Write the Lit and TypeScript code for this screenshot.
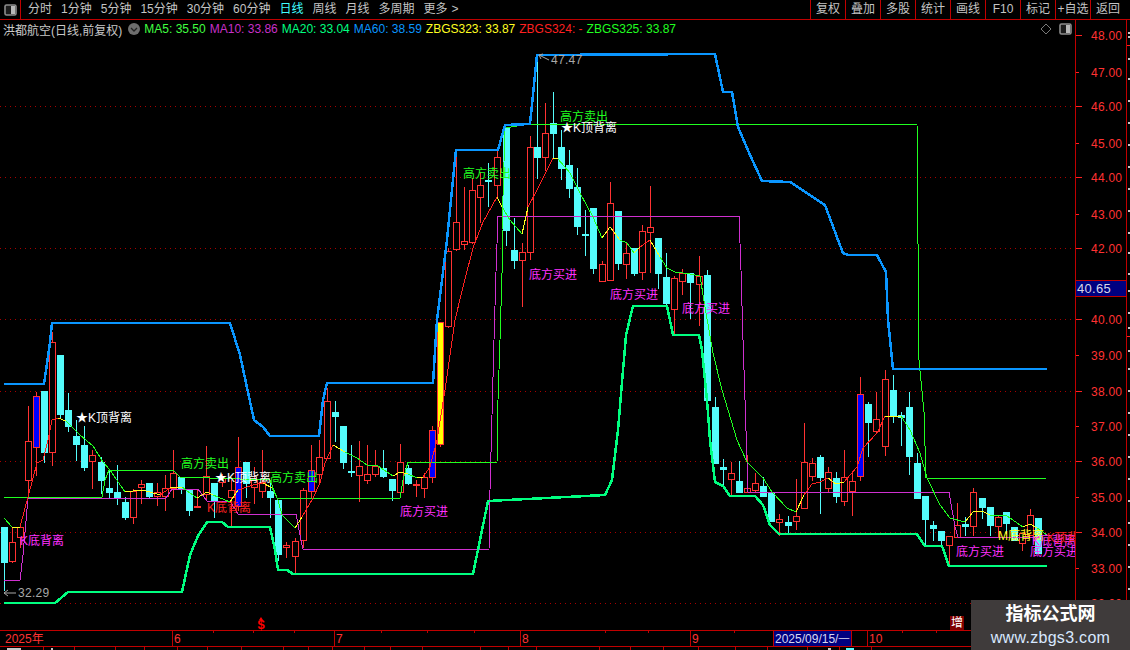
import { LitElement, html, css, svg } from "lit";
import { customElement } from "lit/decorators.js";

type Kind = "c" | "r" | "b" | "y";
type Candle = [number, Kind, number, number, number, number];

const RED = "#ff3232";
const CYAN = "#54fcfc";

const CANDLES: Candle[] = [
  [4,"c",527,562,527,590],[12,"r",542,561,527,562],[20,"r",527,537,527,547],[28,"r",441,480,406,493],
  [36,"b",396,447,392,475],[44,"c",391,452,391,462],[52,"r",342,452,332,465],[60,"c",355,414,355,418],
  [68,"c",410,426,393,431],[76,"c",436,444,420,460],[84,"c",445,467,426,470],[92,"r",455,461,450,488],
  [101,"c",462,480,457,493],[109,"c",488,492,470,497],[117,"c",492,497,465,504],[125,"c",502,517,497,519],
  [133,"r",491,517,489,523],[141,"r",484,487,480,503],[149,"c",483,496,483,498],[157,"r",492,496,483,505],
  [165,"r",488,496,475,510],[173,"r",473,488,450,497],[181,"c",477,489,477,493],[189,"c",490,510,490,515],
  [197,"r",506,507,490,507],[206,"r",476,494,446,500],[214,"c",483,501,483,517],[222,"r",478,482,474,486],
  [231,"r",490,497,480,527],[238,"b",467,506,437,510],[246,"c",462,483,462,497],[254,"r",480,487,467,503],
  [262,"r",482,491,450,497],[270,"c",491,497,480,517],[278,"c",500,554,500,560],[286,"r",545,547,542,557],
  [295,"r",541,556,538,573],[303,"r",490,540,488,547],[311,"b",470,491,445,498],[319,"r",457,474,440,483],
  [327,"r",401,458,388,458],[335,"c",412,416,401,441],[343,"c",426,462,426,468],[351,"c",471,472,445,476],
  [359,"r",466,475,441,501],[367,"r",474,480,445,483],[375,"r",466,474,450,476],[383,"c",468,476,450,477],
  [392,"c",479,490,479,500],[400,"r",462,492,444,496],[408,"c",468,483,465,484],[416,"r",484,485,480,496],
  [424,"r",477,488,473,497],[432,"b",430,477,426,482],[440,"y",322,444,322,446],[448,"r",251,326,248,327],
  [456,"r",222,249,150,250],[464,"r",241,244,187,249],[472,"r",190,242,178,243],[480,"r",185,197,172,222],
  [488,"c",180,181,163,206],[497,"r",157,185,148,198],[506,"c",128,230,128,245],[514,"c",250,260,218,268],
  [522,"r",252,260,243,306],[530,"r",147,252,136,259],[537,"c",147,157,55,178],[545,"r",133,157,103,170],
  [553,"c",123,133,92,158],[561,"c",147,168,130,179],[569,"c",165,188,150,197],[577,"c",187,226,168,234],
  [585,"c",234,235,210,255],[593,"c",208,268,208,273],[602,"r",264,281,261,281],[610,"r",203,280,182,280],
  [618,"c",211,263,211,269],[626,"r",253,264,242,278],[634,"c",248,273,248,275],[642,"r",231,272,225,279],
  [650,"r",227,232,186,272],[658,"c",238,273,238,288],[666,"c",277,303,253,305],[674,"r",278,309,276,333],
  [682,"r",273,281,269,294],[690,"c",273,282,273,318],[699,"r",276,284,256,325],[707,"c",275,400,270,400],
  [715,"c",407,463,397,463],[723,"c",467,469,459,487],[731,"r",473,479,462,495],[739,"c",481,492,461,492],
  [747,"r",488,492,455,492],[755,"r",483,490,473,492],[763,"c",486,496,477,496],[771,"c",493,521,493,521],
  [779,"r",519,522,514,535],[788,"c",522,525,516,532],[796,"r",516,521,479,529],[804,"r",462,508,423,508],
  [812,"r",463,476,458,480],[820,"c",457,477,455,513],[828,"r",472,488,467,491],[836,"c",478,496,472,502],
  [844,"r",477,501,450,505],[852,"r",481,491,473,515],[860,"b",394,476,377,480],[868,"c",404,422,402,456],
  [876,"r",419,431,392,432],[885,"r",379,446,370,455],[893,"c",390,415,375,422],[901,"c",415,417,412,445],
  [909,"c",407,456,392,474],[917,"c",463,498,453,498],[925,"c",496,519,496,545],[933,"c",525,528,521,540],
  [941,"c",531,540,531,545],[949,"r",536,545,536,566],[957,"r",525,537,503,537],[965,"c",524,526,517,535],
  [973,"r",492,526,488,535],[982,"c",498,507,498,518],[990,"c",507,525,507,535],[998,"r",517,526,515,537],
  [1006,"c",512,523,512,533],[1014,"c",527,540,527,540],[1022,"r",533,543,533,550],[1030,"r",515,535,509,535],
  [1038,"c",518,553,518,553],
];

const BLUE: number[][] = [[4,384],[44,384],[50,343],[52,323],[230,323],[240,355],[254,420],[263,427],[270,436],[319,436],[323,400],[327,383],[433,383],[437,320],[447,240],[456,150],[498,150],[505,125],[530,124],[537,55],[715,54],[723,92],[732,92],[738,127],[750,155],[762,181],[790,182],[825,205],[838,240],[843,253],[848,255],[877,255],[886,272],[888,320],[893,369],[1047,369]];
const SPRING: number[][] = [[4,603],[55,603],[68,592],[182,592],[190,555],[198,536],[207,522],[222,522],[228,527],[270,527],[275,550],[278,570],[287,570],[293,574],[473,574],[480,540],[488,501],[605,495],[612,480],[618,430],[626,335],[633,306],[667,306],[673,335],[699,335],[702,350],[707,400],[710,440],[715,482],[723,486],[730,496],[755,496],[763,505],[770,525],[779,534],[917,534],[925,546],[942,546],[949,566],[1047,566]];
const GREEN: number[][] = [[4,497],[102,497],[105,480],[109,470],[173,470],[180,477],[270,480],[277,498],[400,498],[403,480],[408,462],[497,462],[498,400],[500,340],[502,273],[502,230],[505,128],[530,124],[917,124],[919,360],[924,412],[926,478],[1046,479]];
const MAGENTA: number[][] = [[4,580],[20,580],[23,555],[28,498],[166,498],[172,489],[198,489],[207,501],[230,501],[238,514],[296,514],[301,540],[303,549],[489,549],[490,490],[494,340],[496,272],[498,216],[739,216],[741,270],[743,340],[745,400],[748,492],[949,492],[955,527],[958,537],[1040,537]];

const MA_RAW = "4,518,g 12,527,g 20,527,y 28,497,r 37,463,r 43,460,r 48,440,r 52,420,r 58,418,r 66,421,y 80,435,g 93,446,g 103,462,g 110,470,g 125,492,g 133,491,y 142,490,y 150,492,y 160,495,y 170,488,r 182,487,y 190,493,g 197,498,g 207,492,y 213,495,y 230,502,g 238,490,y 253,485,r 263,483,r 272,488,y 278,500,g 282,515,g 295,528,g 302,517,y 313,498,r 320,483,r 325,463,r 333,445,r 345,452,y 357,458,g 367,465,g 378,466,g 393,476,g 400,472,y 408,474,y 417,478,g 423,477,y 430,467,r 437,440,r 445,390,r 455,320,r 463,287,r 473,248,r 483,222,r 497,197,r 502,207,y 510,220,g 522,234,g 528,207,y 537,190,r 553,158,r 558,159,y 570,173,g 580,193,g 593,217,g 602,238,g 610,227,y 620,240,y 627,243,g 634,253,g 640,247,y 650,240,r 660,257,y 667,268,g 675,272,g 690,274,g 700,276,g 705,307,g 713,353,g 722,390,g 737,440,g 747,462,g 763,478,g 772,492,g 787,508,g 796,512,g 804,495,y 812,484,r 820,482,r 828,478,r 836,484,y 844,482,y 857,467,r 863,448,r 877,433,r 885,416,r 901,416,y 910,430,g 920,453,g 927,478,g 940,505,g 950,518,g 965,522,g 973,512,y 982,511,y 990,515,y 1007,516,g 1023,527,g 1030,524,y 1037,528,y 1047,535,g";
const MA = MA_RAW.split(" ").map((s) => s.split(","));
const MA_COL: Record<string, string> = { g: "#20ff20", y: "#ffff20", r: "#ff2020" };

const HI = "高方卖出";
const LO = "底方买进";
const LABELS: [number, number, string, string][] = [
  [76, 417, "★K顶背离", "#ffffff"],
  [20, 540, "K底背离", "#ff30ff"],
  [181, 463, HI, "#20ff20"],
  [215, 477, "★K顶背离", "#ffffff"],
  [270, 477, HI, "#20ff20"],
  [207, 507, "K底背离", "#ff2020"],
  [400, 511, LO, "#ff30ff"],
  [463, 173, HI, "#20ff20"],
  [560, 116, HI, "#20ff20"],
  [561, 127, "★K顶背离", "#ffffff"],
  [529, 274, LO, "#ff30ff"],
  [610, 294, LO, "#ff30ff"],
  [682, 308, LO, "#ff30ff"],
  [956, 551, LO, "#ff30ff"],
  [1030, 551, LO, "#ff30ff"],
  [998, 535, "M底背离", "#ffff20"],
  [1032, 540, "K底背离", "#ff30ff"],
  [1047, 537, "K顶背离", "#ff2020"],
];

const GRID = [106, 177, 248, 319, 391, 461, 532, 603];
const TOOLS = ["分时", "1分钟", "5分钟", "15分钟", "30分钟", "60分钟", "日线", "周线", "月线", "多周期", "更多"];
const ACTIONS = ["复权", "叠加", "多股", "统计", "画线", "F10", "标记", "+自选", "返回"];
const LEGEND: [string, string][] = [
  ["MA5: 35.50", "#40ff40"],
  ["MA10: 33.86", "#c830c8"],
  ["MA20: 33.04", "#00ff80"],
  ["MA60: 38.59", "#0a96ff"],
  ["ZBGS323: 33.87", "#ffff20"],
  ["ZBGS324: -", "#ff2020"],
  ["ZBGS325: 33.87", "#20ff20"],
];
const PRICES = [48, 47, 46, 45, 44, 43, 42, 40, 39, 38, 37, 36, 35, 34, 33, 32];
const PRICE_Y: Record<number, number> = { 48: 35, 47: 72, 46: 106, 45: 143, 44: 177, 43: 214, 42: 248, 40: 319, 39: 355, 38: 391, 37: 426, 36: 461, 35: 497, 34: 532, 33: 568, 32: 603 };
const EDGE_TICKS = [32, 36, 58, 78, 100, 122, 144, 166, 188, 210, 232, 252, 273, 290, 312, 327, 350, 368, 390, 412, 434, 456, 478, 500, 522, 544, 566, 588];
const EDGE_RED = [45, 336];
const T_TOP = [213, 253, 294, 381, 427, 474, 605, 648, 734, 902, 936];
const T_DIV = [172, 334, 520, 690, 867];
const T_LOW = [43, 74, 115, 144, 177, 207, 241, 283, 308, 332, 364, 390, 422, 480, 508, 536, 599, 630, 663, 698, 735, 767, 807, 839, 871];

const pts = (a: number[][]) => a.map((p) => p.join(",")).join(" ");

const chevronIcon = html`<svg class="dot" viewBox="0 0 12 12" width="12" height="12">
  <circle cx="6" cy="6" r="6" fill="#6e6e6e"></circle>
  <path d="M3 5 L6 8 L9 5" fill="none" stroke="#222" stroke-width="1.3"></path>
</svg>`;

const layoutIcon = (cls: string) => html`<svg class=${cls} viewBox="0 0 13 12" width="13" height="12">
  <rect x="1" y="1" width="11" height="10" rx="1.5" fill="#1c1c1c" stroke="#8c8c8c" stroke-width="1.6"></rect>
  <rect x="7" y="2" width="4" height="8" fill="#b8b8b8"></rect>
</svg>`;

const diamondIcon = html`<svg viewBox="0 0 12 12" width="12" height="12">
  <path d="M6 1 L11 6 L6 11 L1 6 Z" fill="none" stroke="#7a7a7a"></path>
</svg>`;

function candle(c: Candle) {
  const [x, k, top, bot, hi, lo] = c;
  const up = k === "r" || k === "b" || k === "y";
  const wick = up ? RED : CYAN;
  const line = svg`<rect x=${x} y=${hi} width="1" height=${lo - hi + 1} fill=${wick}></rect>`;
  if (k === "c") {
    return svg`${line}<rect x=${x - 3} y=${top} width="7" height=${bot - top + 1} fill=${CYAN}></rect>`;
  }
  const fill = k === "b" ? "#0000ff" : k === "y" ? "#ffff00" : "#000000";
  return svg`${line}<rect x=${x - 2.5} y=${top + 0.5} width="6" height=${Math.max(bot - top, 1)} fill=${fill} stroke=${RED}></rect>`;
}

@customElement("price-plot")
class PricePlot extends LitElement {
  static styles = css`
    :host { display: block; width: 1075px; height: 610px; }
    svg { display: block; }
    .line { fill: none; shape-rendering: crispEdges; }
    .grid { stroke: #a80000; stroke-width: 1; stroke-dasharray: 1 4; shape-rendering: crispEdges; }
    .mark { font: 12px "Liberation Sans", "Noto Sans CJK SC", sans-serif; }
    .note { font: 12px "Liberation Sans", sans-serif; fill: #a8a8a8; letter-spacing: 0.3px; }
    .arrow { stroke: #a8a8a8; fill: none; }
    .candles { shape-rendering: crispEdges; }
  `;
  render() {
    return html`<svg viewBox="0 20 1075 610" width="1075" height="610">
      ${GRID.map((y) => svg`<line class="grid" x1="0" x2="1075" y1=${y + 0.5} y2=${y + 0.5}></line>`)}
      <g class="candles">${CANDLES.map(candle)}</g>
      <polyline class="line" points=${pts(MAGENTA)} stroke="#d030d0" stroke-width="1"></polyline>
      <polyline class="line" points=${pts(GREEN)} stroke="#20ff20" stroke-width="1"></polyline>
      <polyline class="line" points=${pts(BLUE)} stroke="#0a96ff" stroke-width="2.5"></polyline>
      <polyline class="line" points=${pts(SPRING)} stroke="#00ff80" stroke-width="2.5"></polyline>
      ${MA.slice(1).map((p, i) => svg`<line class="line" x1=${MA[i][0]} y1=${MA[i][1]} x2=${p[0]} y2=${p[1]} stroke=${MA_COL[p[2]]} stroke-width="1"></line>`)}
      ${LABELS.map(([x, y, t, c]) => svg`<text class="mark" x=${x} y=${y + 5} fill=${c}>${t}</text>`)}
      <path class="arrow" d="M539 55 L549 60 M539 55 L543 54 M539 55 L541 59"></path>
      <text class="note" x="551" y="64">47.47</text>
      <path class="arrow" d="M4 593 H16 M4 593 L8 590 M4 593 L8 596"></path>
      <text class="note" x="18" y="597">32.29</text>
    </svg>`;
  }
}

@customElement("price-axis")
class PriceAxis extends LitElement {
  static styles = css`
    :host { display: block; width: 55px; height: 610px; }
    svg { display: block; shape-rendering: crispEdges; }
    .num { font: 12px "Liberation Sans", sans-serif; fill: #ff3232; letter-spacing: 0.25px; }
    .cur { font: 13px "Liberation Sans", sans-serif; fill: #d8d8e8; letter-spacing: 0.3px; }
  `;
  render() {
    return html`<svg viewBox="1075 20 55 610" width="55" height="610">
      <rect x="1075" y="20" width="1" height="610" fill="#c00000"></rect>
      <rect x="1126" y="20" width="1" height="610" fill="#c00000"></rect>
      ${PRICES.map((p) => {
        const y = PRICE_Y[p];
        const w = p % 2 === 0 ? 6 : 3;
        return svg`<rect x="1076" y=${y} width=${w} height="1" fill="#ff2020"></rect>
          <text class="num" x="1091" y=${y + 5}>${p.toFixed(2)}</text>`;
      })}
      <rect x="1075.5" y="280.5" width="51" height="16" fill="#000080" stroke="#c00000"></rect>
      <text class="cur" x="1077" y="293">40.65</text>
      ${EDGE_TICKS.map((y) => svg`<rect x="1128" y=${y} width="2" height="2" fill="#c8c8c8"></rect>`)}
      ${EDGE_RED.map((y) => svg`<rect x="1127" y=${y} width="3" height="1" fill="#ff2020"></rect>`)}
    </svg>`;
  }
}

@customElement("time-axis")
class TimeAxis extends LitElement {
  static styles = css`
    :host { display: block; width: 1130px; height: 20px; }
    svg { display: block; shape-rendering: crispEdges; }
    .t { font: 12px "Liberation Sans", "Noto Sans CJK SC", sans-serif; fill: #ff3232; }
    .date { font: 12px "Liberation Sans", sans-serif; fill: #d8d8f0; }
  `;
  render() {
    return html`<svg viewBox="0 630 1130 20" width="1130" height="20">
      <rect x="0" y="630" width="1130" height="1" fill="#c00000"></rect>
      <rect x="0" y="646" width="1130" height="1" fill="#c00000"></rect>
      ${T_TOP.map((x) => svg`<rect x=${x} y="631" width="1" height="2" fill="#c00000"></rect>`)}
      ${T_DIV.map((x) => svg`<rect x=${x} y="631" width="1" height="15" fill="#c00000"></rect>`)}
      ${T_LOW.map((x) => svg`<rect x=${x} y="647" width="1" height="3" fill="#c00000"></rect>`)}
      <rect x="7" y="648" width="14" height="2" fill="#c8c8c8"></rect>
      <rect x="51" y="648" width="2" height="2" fill="#c8c8c8"></rect>
      <rect x="828" y="648" width="3" height="2" fill="#c8c8c8"></rect>
      <rect x="846" y="648" width="8" height="2" fill="#54fcfc"></rect>
      <text class="t" x="5" y="643">2025年</text>
      <text class="t" x="174" y="643">6</text>
      <text class="t" x="336" y="643">7</text>
      <text class="t" x="522" y="643">8</text>
      <text class="t" x="692" y="643">9</text>
      <text class="t" x="869" y="643">10</text>
      <rect x="773.5" y="630.5" width="78" height="16" fill="#000080" stroke="#c00000"></rect>
      <text class="date" x="775" y="643">2025/09/15/一</text>
    </svg>`;
  }
}

@customElement("app-root")
class AppRoot extends LitElement {
  static styles = css`
    :host { display: block; position: relative; width: 1130px; height: 650px; background: #000; overflow: hidden; font-family: "Liberation Sans", "Noto Sans CJK SC", sans-serif; }
    .toolbar { display: flex; align-items: center; height: 19px; border-bottom: 1px solid #c00000; color: #c4c4c4; font-size: 12px; }
    .panel { display: flex; align-items: center; justify-content: center; width: 21px; height: 19px; border-right: 1px solid #c00000; box-sizing: border-box; }
    .tools { display: flex; align-items: center; gap: 9px; padding-left: 7px; flex: 1; }
    .tool { line-height: 19px; white-space: nowrap; }
    .active { color: #40ffff; }
    .caret { margin-left: -5px; }
    .actions { display: flex; height: 19px; }
    .act { display: flex; align-items: center; justify-content: center; width: 35px; border-left: 1px solid #c00000; box-sizing: border-box; line-height: 19px; white-space: nowrap; }
    .act:last-child { width: 40px; padding-right: 5px; }
    .body { display: flex; height: 610px; }
    .plot { position: relative; width: 1075px; height: 610px; }
    .legend { position: absolute; top: 0; left: 0; right: 0; height: 18px; display: flex; align-items: center; gap: 4px; padding: 0 3px; font: 12px "Liberation Sans", "Noto Sans CJK SC", sans-serif; white-space: nowrap; }
    .name { color: #c8c8c8; }
    .dot { margin: 0 0 0 2px; }
    .end { margin-left: auto; display: flex; align-items: center; gap: 7px; }
    .end svg { display: block; }
    .sign { position: absolute; left: 257px; top: 619px; width: 8px; color: #ff0000; font: bold 13px/12px "Liberation Sans", sans-serif; text-align: center; }
    .sign::before { content: ""; position: absolute; left: 2px; top: -2px; border-left: 2px solid transparent; border-right: 2px solid transparent; border-bottom: 3px solid #ff0000; }
    .zeng { position: absolute; left: 950px; top: 616px; width: 14px; height: 14px; background: #800000; color: #fff; font-size: 12px; line-height: 14px; text-align: center; }
    .mark { position: absolute; left: 971px; top: 600px; width: 159px; height: 50px; background: #3f3b3b; display: flex; flex-direction: column; align-items: center; color: #fff; }
    .mark-a { font-size: 18px; font-weight: 700; line-height: 29px; }
    .mark-b { font: 16px/18px "Liberation Sans", sans-serif; color: #d8e8ff; letter-spacing: 0.3px; }
  `;
  render() {
    return html`
      <div class="toolbar">
        <div class="panel">${layoutIcon("")}</div>
        <div class="tools">
          ${TOOLS.map((t) => html`<span class="tool ${t === "日线" ? "active" : ""}">${t}</span>`)}
          <span class="tool caret">&gt;</span>
        </div>
        <div class="actions">${ACTIONS.map((a) => html`<span class="act">${a}</span>`)}</div>
      </div>
      <div class="body">
        <div class="plot">
          <price-plot></price-plot>
          <div class="legend">
            <span class="name">洪都航空(日线,前复权)</span>
            ${chevronIcon}
            ${LEGEND.map(([t, c]) => html`<span style="color:${c}">${t}</span>`)}
            <span class="end">${diamondIcon}${layoutIcon("")}</span>
          </div>
        </div>
        <price-axis></price-axis>
      </div>
      <time-axis></time-axis>
      <div class="sign">$</div>
      <div class="zeng">增</div>
      <div class="mark"><span class="mark-a">指标公式网</span><span class="mark-b">www.zbgs3.com</span></div>
    `;
  }
}
